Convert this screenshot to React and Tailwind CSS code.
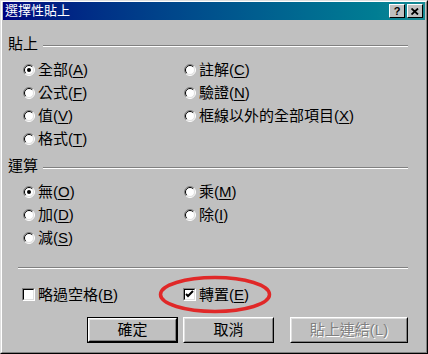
import React from "react";

const Radio = ({ checked }) => (
  <svg width="12" height="12" viewBox="0 0 12 12" className="shrink-0">
    <circle cx="6" cy="6" r="5" fill="#fff" />
    <path d="M2.1 9.9 A5.5 5.5 0 0 1 9.9 2.1" stroke="#808080" fill="none" />
    <path d="M9.9 2.1 A5.5 5.5 0 0 1 2.1 9.9" stroke="#fff" fill="none" />
    <path d="M2.8 9.2 A4.5 4.5 0 0 1 9.2 2.8" stroke="#000" fill="none" />
    <path d="M9.2 2.8 A4.5 4.5 0 0 1 2.8 9.2" stroke="#dfdfdf" fill="none" />
    {checked && <circle cx="6" cy="6" r="2" fill="#000" />}
  </svg>
);

const Check = ({ checked }) => (
  <div className="w-[13px] h-[13px] shrink-0 border border-t-[#808080] border-l-[#808080] border-r-white border-b-white">
    <div className="w-full h-full bg-white border border-t-black border-l-black border-r-[#dfdfdf] border-b-[#dfdfdf]">
      {checked && (
        <svg width="9" height="9" viewBox="0 0 9 9">
          <path d="M1 4 L3 6 L8 1" stroke="#000" strokeWidth="2" fill="none" />
        </svg>
      )}
    </div>
  </div>
);

// label text with the mnemonic letter underlined
const Label = ({ text, keyChar }) => (
  <span className="whitespace-nowrap leading-[23px]">
    {text}(<span className="underline underline-offset-2">{keyChar}</span>)
  </span>
);

const Option = ({ text, keyChar, checked }) => (
  <div className="h-[23px] flex items-center gap-[3px]">
    <Radio checked={checked} />
    <Label text={text} keyChar={keyChar} />
  </div>
);

const GroupHeader = ({ title, className = "" }) => (
  <div className={`flex items-center h-4 ${className}`}>
    <span className="leading-4">{title}</span>
    <div className="flex-1 ml-[5px] mt-[3px] h-[2px] border-t border-t-[#808080] border-b border-b-white" />
  </div>
);

const WinButton = ({ children, width, isDefault, disabled, className = "" }) => {
  const inner = (
    <div className="h-full border border-t-white border-l-white border-r-black border-b-black">
      <div className="h-full flex items-center justify-center border border-t-[#dfdfdf] border-l-[#dfdfdf] border-r-[#808080] border-b-[#808080]">
        <span
          className={
            disabled
              ? "text-[#808080] [text-shadow:1px_1px_0_#ffffff]"
              : "text-black"
          }
        >
          {children}
        </span>
      </div>
    </div>
  );
  return (
    <div className={`h-[26px] ${width} ${isDefault ? "border border-black" : ""} ${className}`}>
      {inner}
    </div>
  );
};

export default function App() {
  return (
    <div className="relative w-[428px] h-[354px] bg-[#c0c0c0] border border-t-[#dfdfdf] border-l-[#dfdfdf] border-r-black border-b-black text-[15px] text-black font-['Liberation_Sans','Noto_Sans_CJK_TC',sans-serif]">
      <div className="h-full border border-t-white border-l-white border-r-[#808080] border-b-[#808080] px-px">
        {/* Title bar */}
        <div className="h-[18px] flex items-center justify-between bg-linear-to-r from-[#000080] to-[#168a94]">
          <span className="pl-[2px] text-white text-[13px] leading-[18px]">選擇性貼上</span>
          <div className="flex gap-[2px] pr-[2px]">
            <div className="w-4 h-[14px] bg-[#c0c0c0] border border-t-white border-l-white border-r-black border-b-black flex items-center justify-center">
              <span className="text-[11px] font-bold leading-none">?</span>
            </div>
            <div className="w-4 h-[14px] bg-[#c0c0c0] border border-t-white border-l-white border-r-black border-b-black flex items-center justify-center">
              <svg width="8" height="7" viewBox="0 0 8 7">
                <path d="M0.5 0.5 L7 6.5 M7 0.5 L0.5 6.5" stroke="#000" strokeWidth="1.8" />
              </svg>
            </div>
          </div>
        </div>

        {/* Body */}
        <div className="pl-[5px] pr-[17px]">
          <GroupHeader title="貼上" className="mt-[16px]" />
          <div className="mt-[6px] pl-[15px] grid grid-cols-[161px_1fr]">
            <Option text="全部" keyChar="A" checked />
            <Option text="註解" keyChar="C" />
            <Option text="公式" keyChar="F" />
            <Option text="驗證" keyChar="N" />
            <Option text="值" keyChar="V" />
            <Option text="框線以外的全部項目" keyChar="X" />
            <Option text="格式" keyChar="T" />
          </div>

          <GroupHeader title="運算" className="mt-[8px]" />
          <div className="mt-[6px] pl-[15px] grid grid-cols-[161px_1fr]">
            <Option text="無" keyChar="O" checked />
            <Option text="乘" keyChar="M" />
            <Option text="加" keyChar="D" />
            <Option text="除" keyChar="I" />
            <Option text="減" keyChar="S" />
          </div>

          <div className="mt-[18px] ml-[10px] h-[2px] border-t border-t-[#808080] border-b border-b-white" />

          <div className="mt-[14px] pl-[14px] grid grid-cols-[161px_1fr]">
            <div className="h-[23px] flex items-center gap-[3px]">
              <Check />
              <Label text="略過空格" keyChar="B" />
            </div>
            <div className="h-[23px] flex items-center gap-[3px]">
              <Check checked />
              <Label text="轉置" keyChar="E" />
            </div>
          </div>

          <div className="mt-[11px] ml-[79px] flex">
            <WinButton width="w-[94px]" isDefault>確定</WinButton>
            <WinButton width="w-[94px]" className="ml-[5px]">取消</WinButton>
            <WinButton width="w-[122px]" className="ml-[16px]" disabled>貼上連結(L)</WinButton>
          </div>
        </div>
      </div>

      {/* red annotation ellipse */}
      <svg
        className="absolute left-[157px] top-[274px] pointer-events-none"
        width="114"
        height="39"
        viewBox="0 0 114 39"
      >
        <ellipse cx="57" cy="19.5" rx="54.5" ry="17" fill="none" stroke="#e02828" strokeWidth="3.5" />
      </svg>
    </div>
  );
}
